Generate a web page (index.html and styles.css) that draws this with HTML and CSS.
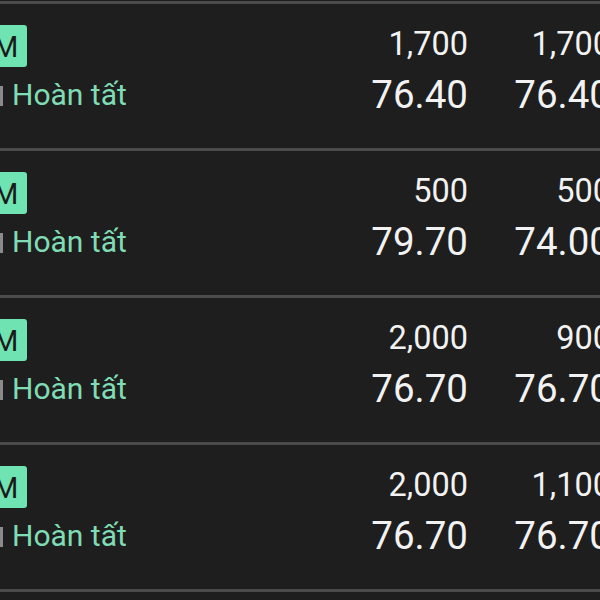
FILE: index.html
```html
<!DOCTYPE html>
<html lang="vi">
<head>
<meta charset="utf-8">
<link rel="stylesheet" href="styles.css">
</head>
<body>
<div class="list">
  <div class="row">
    <div class="left">
      <div class="badge">M</div>
      <div class="status"><span class="pipe"></span>Hoàn tất</div>
    </div>
    <div class="col"><div class="qty">1,700</div><div class="price">76.40</div></div>
    <div class="col"><div class="qty">1,700</div><div class="price">76.40</div></div>
  </div>
  <div class="row">
    <div class="left">
      <div class="badge">M</div>
      <div class="status"><span class="pipe"></span>Hoàn tất</div>
    </div>
    <div class="col"><div class="qty">500</div><div class="price">79.70</div></div>
    <div class="col"><div class="qty">500</div><div class="price">74.00</div></div>
  </div>
  <div class="row">
    <div class="left">
      <div class="badge">M</div>
      <div class="status"><span class="pipe"></span>Hoàn tất</div>
    </div>
    <div class="col"><div class="qty">2,000</div><div class="price">76.70</div></div>
    <div class="col"><div class="qty">900</div><div class="price">76.70</div></div>
  </div>
  <div class="row">
    <div class="left">
      <div class="badge">M</div>
      <div class="status"><span class="pipe"></span>Hoàn tất</div>
    </div>
    <div class="col"><div class="qty">2,000</div><div class="price">76.70</div></div>
    <div class="col"><div class="qty">1,100</div><div class="price">76.70</div></div>
  </div>
  <div class="end"></div>
</div>
</body>
</html>
```
FILE: styles.css
```css
html, body {
  margin: 0;
  padding: 0;
  background: #1e1e1e;
  overflow: hidden;
}
body {
  width: 600px;
  height: 600px;
  font-family: Roboto, "Noto Sans", sans-serif;
  color: #f2f2f2;
}
.list {
  width: 611px;
  margin-top: 1px;
}
.row {
  display: grid;
  grid-template-columns: 1fr 143px 143px;
  height: 144px;
  border-top: 3px solid #4b4b4b;
}
.end {
  border-top: 3px solid #4b4b4b;
}
.left {
  padding-top: 21px;
}
.badge {
  display: inline-block;
  margin-left: -16px;
  padding: 6px 9px 4px;
  height: 32px;
  line-height: 32px;
  font-size: 29px;
  background: #6fe3b1;
  color: #1a1a1a;
  border-radius: 3px;
}
.status {
  display: flex;
  align-items: center;
  margin-top: 12px;
  font-size: 30px;
  line-height: 32px;
  color: #7fdcb4;
}
.pipe {
  flex: none;
  width: 3px;
  height: 20px;
  background: #8a8a8a;
  margin-right: 9px;
  margin-top: 1px;
}
.col {
  text-align: right;
  padding-top: 24px;
}
.qty {
  font-size: 32.5px;
  line-height: 32px;
}
.price {
  margin-top: 15px;
  font-size: 38.5px;
  line-height: 40px;
}
```
